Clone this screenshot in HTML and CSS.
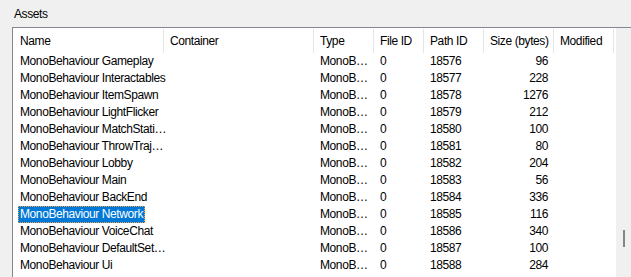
FILE: index.html
```html
<!DOCTYPE html>
<html lang="en">
<head>
  <meta charset="UTF-8" />
  <title>Assets</title>
  <link rel="stylesheet" href="styles.css">
</head>
<body>

<div class="group-title">Assets</div>

<div class="list-box">
  <div class="list-view">
    <div class="row header">
      <div class="cell">Name</div>
      <div class="cell">Container</div>
      <div class="cell">Type</div>
      <div class="cell">File ID</div>
      <div class="cell">Path ID</div>
      <div class="cell num">Size (bytes)</div>
      <div class="cell">Modified</div>
    </div>

    <div class="row"><div class="cell"><span class="label">MonoBehaviour Gameplay</span></div><div class="cell"></div><div class="cell">MonoB…</div><div class="cell">0</div><div class="cell">18576</div><div class="cell num">96</div><div class="cell"></div></div>
    <div class="row"><div class="cell"><span class="label">MonoBehaviour Interactables</span></div><div class="cell"></div><div class="cell">MonoB…</div><div class="cell">0</div><div class="cell">18577</div><div class="cell num">228</div><div class="cell"></div></div>
    <div class="row"><div class="cell"><span class="label">MonoBehaviour ItemSpawn</span></div><div class="cell"></div><div class="cell">MonoB…</div><div class="cell">0</div><div class="cell">18578</div><div class="cell num">1276</div><div class="cell"></div></div>
    <div class="row"><div class="cell"><span class="label">MonoBehaviour LightFlicker</span></div><div class="cell"></div><div class="cell">MonoB…</div><div class="cell">0</div><div class="cell">18579</div><div class="cell num">212</div><div class="cell"></div></div>
    <div class="row"><div class="cell"><span class="label">MonoBehaviour MatchStati…</span></div><div class="cell"></div><div class="cell">MonoB…</div><div class="cell">0</div><div class="cell">18580</div><div class="cell num">100</div><div class="cell"></div></div>
    <div class="row"><div class="cell"><span class="label">MonoBehaviour ThrowTraj…</span></div><div class="cell"></div><div class="cell">MonoB…</div><div class="cell">0</div><div class="cell">18581</div><div class="cell num">80</div><div class="cell"></div></div>
    <div class="row"><div class="cell"><span class="label">MonoBehaviour Lobby</span></div><div class="cell"></div><div class="cell">MonoB…</div><div class="cell">0</div><div class="cell">18582</div><div class="cell num">204</div><div class="cell"></div></div>
    <div class="row"><div class="cell"><span class="label">MonoBehaviour Main</span></div><div class="cell"></div><div class="cell">MonoB…</div><div class="cell">0</div><div class="cell">18583</div><div class="cell num">56</div><div class="cell"></div></div>
    <div class="row"><div class="cell"><span class="label">MonoBehaviour BackEnd</span></div><div class="cell"></div><div class="cell">MonoB…</div><div class="cell">0</div><div class="cell">18584</div><div class="cell num">336</div><div class="cell"></div></div>
    <div class="row"><div class="cell"><span class="label selected">MonoBehaviour Network</span></div><div class="cell"></div><div class="cell">MonoB…</div><div class="cell">0</div><div class="cell">18585</div><div class="cell num">116</div><div class="cell"></div></div>
    <div class="row"><div class="cell"><span class="label">MonoBehaviour VoiceChat</span></div><div class="cell"></div><div class="cell">MonoB…</div><div class="cell">0</div><div class="cell">18586</div><div class="cell num">340</div><div class="cell"></div></div>
    <div class="row"><div class="cell"><span class="label">MonoBehaviour DefaultSet…</span></div><div class="cell"></div><div class="cell">MonoB…</div><div class="cell">0</div><div class="cell">18587</div><div class="cell num">100</div><div class="cell"></div></div>
    <div class="row"><div class="cell"><span class="label">MonoBehaviour Ui</span></div><div class="cell"></div><div class="cell">MonoB…</div><div class="cell">0</div><div class="cell">18588</div><div class="cell num">284</div><div class="cell"></div></div>
  </div>

  <div class="scrollbar">
    <div class="thumb"></div>
  </div>
</div>

</body>
</html>
```

FILE: styles.css
```css
html, body {
  margin: 0;
  padding: 0;
  height: 100%;
  overflow: hidden;
}
body {
  background: #f0f0f0;
  font-family: "Liberation Sans", Arial, sans-serif;
  font-size: 12px;
  letter-spacing: -0.4px;
  color: #000;
}
.group-title {
  padding: 7px 0 0 14px;
  height: 27px;
  line-height: 15px;
  box-sizing: border-box;
}
.list-box {
  margin-left: 12px;
  border-top: 1px solid #828790;
  border-left: 1px solid #828790;
  display: flex;
  height: 260px;
}
.list-view {
  width: 603px;
  background: #fff;
}
.row {
  display: grid;
  grid-template-columns: 151px 150px 60px 50px 60px 70px 60px;
  height: 17px;
  line-height: 17px;
}
.row.header {
  height: 25px;
  line-height: 25px;
}
.cell {
  padding: 0 6px;
  white-space: nowrap;
  overflow: hidden;
}
.header .cell {
  border-right: 1px solid #e5e5e5;
  margin: 1px 0 0;
  line-height: 24px;
}
.num {
  text-align: right;
}
.row .cell:first-child {
  padding-left: 5px;
  overflow: visible;
}
.header .cell:first-child {
  padding-left: 7px;
}
.label {
  display: inline-block;
  padding: 0 2px;
  height: 17px;
  line-height: 17px;
  box-sizing: border-box;
}
.label.selected {
  background: #0078d7;
  color: #fff;
  border: 1px dotted #f0a24a;
  line-height: 15px;
  padding: 0 1px;
}
.scrollbar {
  width: 15px;
  background: #f0f0f0;
  position: relative;
}
.thumb {
  position: absolute;
  left: 7px;
  top: 202px;
  width: 2px;
  height: 17px;
  background: #868686;
}
```
